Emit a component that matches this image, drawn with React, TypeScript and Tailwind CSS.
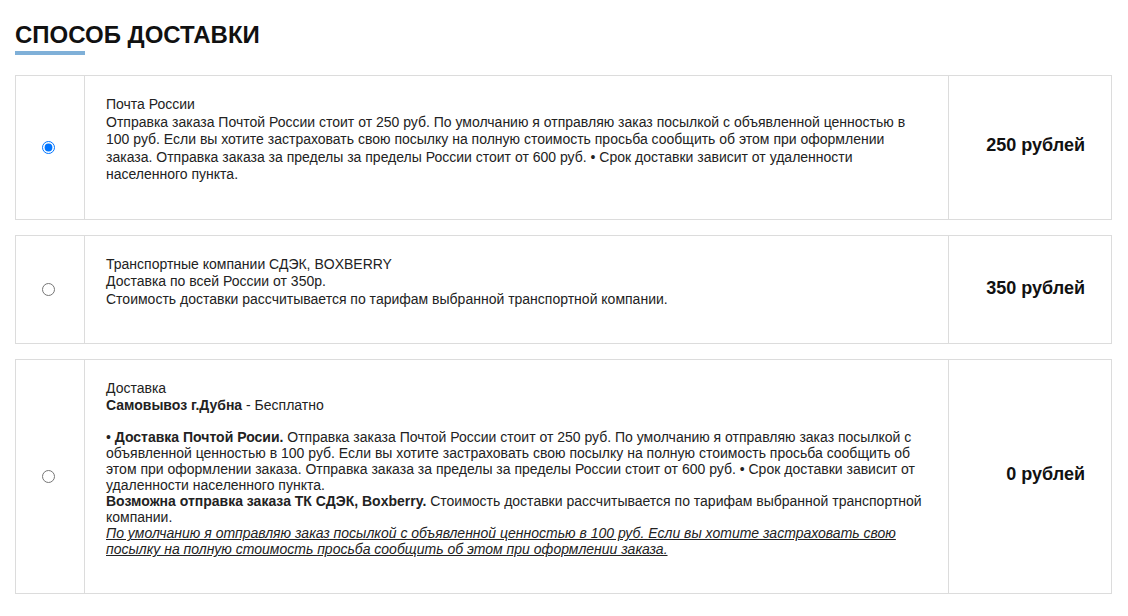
import React from 'react';

type Option = {
  id: string;
  price: string;
  checked?: boolean;
  content: React.ReactNode;
  leading: string;
};

const options: Option[] = [
  {
    id: 'post',
    price: '250 рублей',
    checked: true,
    leading: 'leading-[17.6px]',
    content: (
      <>
        <div>Почта России</div>
        <div>
          Отправка заказа Почтой России стоит от 250 руб. По умолчанию я отправляю заказ посылкой с объявленной ценностью в
          100 руб. Если вы хотите застраховать свою посылку на полную стоимость просьба сообщить об этом при оформлении
          заказа. Отправка заказа за пределы за пределы России стоит от 600 руб. • Срок доставки зависит от удаленности
          населенного пункта.
        </div>
      </>
    ),
  },
  {
    id: 'tk',
    price: '350 рублей',
    leading: 'leading-[17.5px]',
    content: (
      <>
        <div>Транспортные компании СДЭК, BOXBERRY</div>
        <div>Доставка по всей России от 350р.</div>
        <div>Стоимость доставки рассчитывается по тарифам выбранной транспортной компании.</div>
      </>
    ),
  },
  {
    id: 'pickup',
    price: '0 рублей',
    leading: 'leading-[16.1px]',
    content: (
      <>
        <div>Доставка</div>
        <div>
          <b>Самовывоз г.Дубна</b> - Бесплатно
        </div>
        <div>&nbsp;</div>
        <div>
          • <b>Доставка Почтой Росии.</b> Отправка заказа Почтой России стоит от 250 руб. По умолчанию я отправляю заказ
          посылкой с объявленной ценностью в 100 руб. Если вы хотите застраховать свою посылку на полную стоимость просьба
          сообщить об этом при оформлении заказа. Отправка заказа за пределы за пределы России стоит от 600 руб. • Срок
          доставки зависит от удаленности населенного пункта.
        </div>
        <div>
          <b>Возможна отправка заказа ТК СДЭК, Boxberry.</b> Стоимость доставки рассчитывается по тарифам выбранной
          транспортной компании.
        </div>
        <div className="italic underline">
          По умолчанию я отправляю заказ посылкой с объявленной ценностью в 100 руб. Если вы хотите застраховать свою
          посылку на полную стоимость просьба сообщить об этом при оформлении заказа.
        </div>
      </>
    ),
  },
];

export default function App() {
  return (
    <div className="min-h-screen bg-white pl-[15px] pr-[16px] pt-[22px] text-[#222] font-['Liberation_Sans',Arial,sans-serif]">
      <h2 className="text-[24px] font-bold leading-[26px] text-[#111] uppercase">Способ доставки</h2>
      <div className="mt-[3px] h-[4px] w-[70px] bg-[#7fb0d8]" />

      <div className="mt-[20px] flex flex-col gap-[15px]">
        {options.map((o) => (
          <label key={o.id} className="flex border border-[#dcdcdc] bg-white">
            <div className="flex w-[69px] shrink-0 items-center pl-[26px] border-r border-[#dcdcdc]">
              <input
                type="radio"
                name="delivery"
                defaultChecked={o.checked}
                className="m-0 h-[13px] w-[13px]"
              />
            </div>
            <div className={`flex-1 pl-[21px] pr-[25px] pt-[20px] pb-[35px] text-[14px] ${o.leading}`}>{o.content}</div>
            <div className="flex w-[163px] shrink-0 items-center justify-end pr-[26px] pb-[3px] border-l border-[#dcdcdc] text-[18px] font-bold text-[#111]">
              {o.price}
            </div>
          </label>
        ))}
      </div>
    </div>
  );
}
